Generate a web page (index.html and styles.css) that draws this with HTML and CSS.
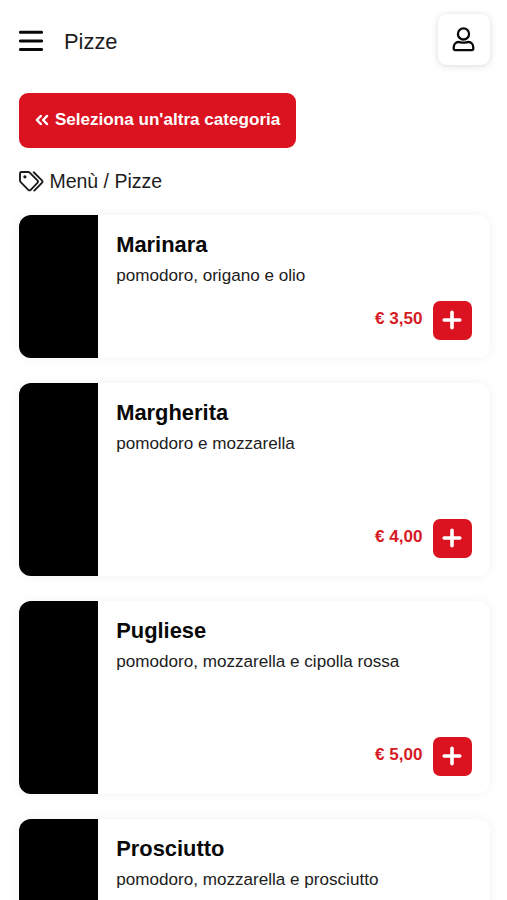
FILE: index.html
```html
<!DOCTYPE html>
<html lang="it">
<head>
<meta charset="utf-8">
<meta name="viewport" content="width=device-width, initial-scale=1">
<title>Pizze</title>
<link rel="stylesheet" href="styles.css">
</head>
<body>
<header class="topbar">
  <svg class="menu-icon" viewBox="0 0 24 22" aria-hidden="true"><path d="M1.4 2.3H22.6M1.4 11H22.6M1.4 19.6H22.6"/></svg>
  <h1 class="page-title">Pizze</h1>
  <button class="account" aria-label="Account">
    <svg class="user-icon" viewBox="0 0 24 26" aria-hidden="true"><circle cx="12" cy="7.2" r="5.8"/><path d="M7 15.6C8.8 15.6 9.7 16.3 12 16.3S15.2 15.6 17 15.6C20.4 15.6 22.2 18.2 22.2 21.4V22.4Q22.2 24 20.6 24H3.4Q1.8 24 1.8 22.4V21.4C1.8 18.2 3.6 15.6 7 15.6Z"/></svg>
  </button>
</header>
<main class="content">
  <a class="category-button"><svg class="back-icon" viewBox="0 0 14 12" aria-hidden="true"><path d="M5.8 2 1.9 6 5.8 10M12 2 8.1 6 12 10"/></svg>Seleziona un'altra categoria</a>
  <nav class="breadcrumb">
    <svg class="tags-icon" viewBox="0 0 25 21" aria-hidden="true"><path d="M2.5 1H9Q10 1 10.7 1.7L18.4 9.4Q19.6 10.6 18.4 11.8L11.7 18.8Q10.5 20 9.3 18.8L1.7 11.2Q1 10.5 1 9.5V2.5Q1 1 2.5 1ZM14.7 1.3 22.9 9.4Q24.1 10.6 22.9 11.8L15.3 19.6"/><circle cx="5.9" cy="5.8" r="1.6"/></svg>
    <span>Menù / Pizze</span>
  </nav>
  <section class="products">
    <article class="card card-short">
      <div class="photo"></div>
      <div class="details"><h2 class="name">Marinara</h2><p class="description">pomodoro, origano e olio</p>
        <div class="purchase"><span class="price">€ 3,50</span><button class="add" aria-label="Aggiungi"><svg viewBox="0 0 20 20"><path d="M10 2.2V17.8M2.2 10H17.8"/></svg></button></div></div>
    </article>
    <article class="card">
      <div class="photo"></div>
      <div class="details"><h2 class="name">Margherita</h2><p class="description">pomodoro e mozzarella</p>
        <div class="purchase"><span class="price">€ 4,00</span><button class="add" aria-label="Aggiungi"><svg viewBox="0 0 20 20"><path d="M10 2.2V17.8M2.2 10H17.8"/></svg></button></div></div>
    </article>
    <article class="card">
      <div class="photo"></div>
      <div class="details"><h2 class="name">Pugliese</h2><p class="description">pomodoro, mozzarella e cipolla rossa</p>
        <div class="purchase"><span class="price">€ 5,00</span><button class="add" aria-label="Aggiungi"><svg viewBox="0 0 20 20"><path d="M10 2.2V17.8M2.2 10H17.8"/></svg></button></div></div>
    </article>
    <article class="card">
      <div class="photo"></div>
      <div class="details"><h2 class="name">Prosciutto</h2><p class="description">pomodoro, mozzarella e prosciutto</p></div>
    </article>
  </section>
</main>
</body>
</html>
```
FILE: styles.css
```css
* { box-sizing: border-box; }
body {
  margin: 0;
  height: 900px;
  overflow: hidden;
  background: #fff;
  color: #080808;
  font-family: "Liberation Sans", Arial, sans-serif;
}
h1, h2, p { margin: 0; }
button { padding: 0; border: 0; font: inherit; color: inherit; }
svg { display: block; fill: none; stroke: currentColor; stroke-linecap: round; stroke-linejoin: round; }
.topbar { display: flex; align-items: center; height: 79px; padding: 0 17px 0 19px; }
.menu-icon { width: 24px; height: 22px; margin-top: 3px; stroke-width: 3; }
.page-title { margin: 4px 0 0 21px; font-size: 21.9px; font-weight: 400; line-height: 28px; color: #1c1c1c; }
.account {
  display: grid;
  place-items: center;
  width: 52px;
  height: 51px;
  margin-left: auto;
  border-radius: 9px;
  background: #fff;
  box-shadow: 0 1px 7px rgba(0, 0, 0, 0.15);
}
.user-icon { width: 23px; height: 25px; margin-right: 1px; stroke-width: 2.4; }
.content { height: 821px; overflow: hidden; padding: 13.7px 17px 0 19.4px; }
.category-button {
  display: flex;
  align-items: center;
  width: 277px;
  height: 55.5px;
  padding: 0 0 1px 16px;
  border-radius: 9px;
  background: #db121f;
  color: #fff;
  font-size: 17.1px;
  font-weight: 700;
}
.back-icon { width: 14px; height: 12px; margin-right: 5.5px; stroke-width: 2.5; }
.breadcrumb { display: flex; align-items: center; gap: 5px; height: 24px; margin-top: 21.3px; font-size: 19.5px; color: #1c1c1c; }
.tags-icon { width: 25px; height: 21px; stroke-width: 1.9; }
.tags-icon circle { fill: currentColor; stroke: none; }
.products { display: grid; gap: 24.4px; margin-top: 21.2px; }
.card {
  display: flex;
  height: 193.6px;
  overflow: hidden;
  border-radius: 12px;
  background: #fff;
  box-shadow: 0 0 12px rgba(0, 0, 0, 0.055);
}
.card-short { height: 143.6px; }
.photo { width: 78.3px; background: #000; }
.details { display: flex; flex: 1; flex-direction: column; padding: 17px 18.5px 18.7px 18.5px; }
.name { font-size: 21.9px; font-weight: 700; line-height: 25px; }
.description { margin-top: 8px; font-size: 17.1px; line-height: 22px; color: #202020; }
.purchase { display: flex; align-items: center; justify-content: flex-end; gap: 10.5px; margin-top: auto; }
.price { margin-top: -3px; color: #d61b26; font-size: 17.1px; font-weight: 700; }
.add { display: grid; place-items: center; width: 38.5px; height: 39px; border-radius: 7px; background: #db121f; color: #fff; }
.add svg { width: 20px; height: 20px; stroke-width: 3.6; }
```
